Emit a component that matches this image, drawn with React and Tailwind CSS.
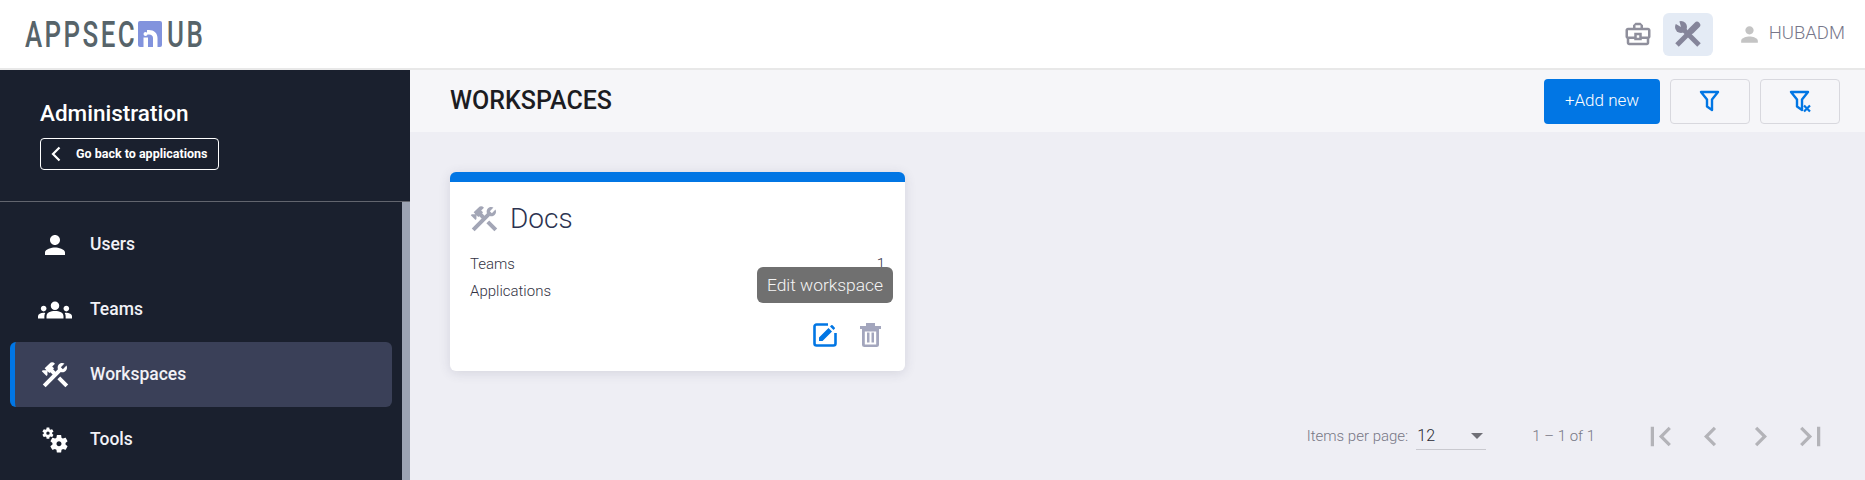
import React from "react";
import {
  MdPerson,
  MdGroups,
  MdConstruction,
  MdMiscellaneousServices,
  MdOutlineBusinessCenter,
} from "react-icons/md";

const navItems = [
  { label: "Users", icon: MdPerson, size: 30 },
  { label: "Teams", icon: MdGroups, size: 34 },
  { label: "Workspaces", icon: MdConstruction, size: 32 },
  { label: "Tools", icon: MdMiscellaneousServices, size: 30 },
];

const Logo = () => (
  <div className="flex items-center text-[#57646a] font-['Roboto',sans-serif] font-medium text-[37px] leading-none">
    <span className="w-[113px] scale-x-[0.7] origin-left tracking-[3.5px] whitespace-nowrap">APPSEC</span>
    <svg width="24" height="26" viewBox="0 0 24 26">
      <rect width="24" height="26" rx="2" fill="#8293dd" />
      <circle cx="7.500" cy="13" r="2" fill="#fff" />
      <path d="M5.500 16.500H10V26H5.500zM9 9h2c5 0 8.500 3 8.500 8v9H15v-9c0-2-1.500-3.500-4-3.500H9z" fill="#fff" />
    </svg>
    <span className="ml-[5px] w-[36px] scale-x-[0.7] origin-left tracking-[3.5px]">UB</span>
  </div>
);

const HeaderToolsIcon = () => (
  <svg width="26" height="26" viewBox="0 0 26 26" fill="none" stroke="#85859a">
    <path d="M8 8l16 16" strokeWidth="5" />
    <circle cx="6" cy="6" r="6" fill="#85859a" stroke="none" />
    <path d="M-1 2l7 4 -2-7z" fill="#e4ebf5" stroke="none" />
    <path d="M2 24l13-13" strokeWidth="5" />
    <path d="M16 10l6-6" strokeWidth="6.500" strokeLinecap="round" />
  </svg>
);

const FilterIcon = ({ clear }) => (
  <svg width="26" height="26" viewBox="0 0 26 26" fill="none" stroke="#0176e4" strokeWidth="2.400" strokeLinejoin="round">
    <path d="M4 4h17l-6 7.500V22l-5-3.500v-7z" />
    {clear && <path d="M17 17.500l6 6M23 17.500l-6 6" strokeWidth="2.200" />}
  </svg>
);

const EditIcon = () => (
  <svg width="24" height="24" viewBox="0 0 24 24" fill="none">
    <path d="M15 1.500H3.500a2 2 0 0 0-2 2v17a2 2 0 0 0 2 2h17a2 2 0 0 0 2-2V10" stroke="#0176e4" strokeWidth="2.600" />
    <path d="M6 18v-3.500L15.500 5 19 8.500 9.500 18zM17 3.500l1.200-1.200a1 1 0 0 1 1.400 0l2.100 2.100a1 1 0 0 1 0 1.400L20.500 7z" fill="#0176e4" />
  </svg>
);

const TrashIcon = () => (
  <svg width="21" height="24" viewBox="0 0 21 24" fill="#a3a6bd">
    <path d="M6 0h9v3h6v3H0V3h6z" />
    <path d="M2 6h17v15.500a2.500 2.500 0 0 1-2.500 2.500h-12A2.500 2.500 0 0 1 2 21.500zm2.800 2.500v13h11.400v-13z" clipRule="evenodd" fillRule="evenodd" />
    <path d="M7 9.500h2.500v10H7zM11.500 9.500H14v10h-2.500z" />
  </svg>
);

const PagerIcon = ({ d }) => (
  <button className="w-[50px] h-[40px] flex items-center justify-center">
    <svg width="39" height="39" viewBox="0 0 24 24" fill="#b3b3b8">
      <path d={d} />
    </svg>
  </button>
);

const App = () => {
  return (
    <div className="w-[1865px] h-[480px] overflow-hidden flex flex-col font-['Roboto',sans-serif] bg-[#eeeef4]">
      <header className="h-[70px] shrink-0 bg-white border-b-2 border-[#e8e8e8] flex items-center justify-between pl-[25px] pr-[20px]">
        <Logo />
        <div className="flex items-center">
          <MdOutlineBusinessCenter size={30} className="text-[#8f8f9c]" />
          <div className="ml-[10px] w-[50px] h-[43px] bg-[#e4ebf5] rounded-md flex items-center justify-center">
            <HeaderToolsIcon />
          </div>
          <div className="ml-[24px] flex items-center">
            <MdPerson size={25} className="text-[#c4c4c4]" />
            <span className="ml-[7px] text-[18.500px] font-light text-[#77778a]">HUBADM</span>
          </div>
        </div>
      </header>

      <div className="flex-1 flex min-h-0">
        <aside className="w-[410px] shrink-0 bg-[#1a202e] flex flex-col">
          <div className="h-[132px] shrink-0 border-b border-[#62656e] pl-[40px] pt-[30px]">
            <h1 className="text-[22.500px] leading-[26px] font-medium text-white">Administration</h1>
            <button className="mt-[12px] w-[179px] h-[32px] border border-white rounded flex items-center text-white">
              <svg width="10" height="16" viewBox="0 0 10 16" fill="none" stroke="#fff" strokeWidth="2.200" className="ml-[10px]">
                <path d="M8.500 1.500L2 8l6.500 6.500" />
              </svg>
              <span className="ml-[15px] text-[12.500px] font-bold whitespace-nowrap">Go back to applications</span>
            </button>
          </div>
          <div className="flex-1 flex min-h-0">
            <nav className="flex-1 pl-[10px] pr-[10px] pt-[10px]">
              {navItems.map((item) => {
                const Icon = item.icon;
                return (
                  <a
                    key={item.label}
                    className={
                      item.label === "Workspaces"
                        ? "h-[65px] flex items-center rounded-md bg-[#3a4058] border-l-[5px] border-[#0176e4] text-[#f1f1f6]"
                        : "h-[65px] flex items-center rounded-md border-l-[5px] border-transparent text-[#f1f1f6]"
                    }
                  >
                    <span className="w-[75px] pl-[4px] flex justify-center">
                      <Icon size={item.size} className={item.label === "Tools" ? "text-white rotate-180" : "text-white"} />
                    </span>
                    <span className="text-[17.500px] font-medium">{item.label}</span>
                  </a>
                );
              })}
            </nav>
            <div className="w-[8px] bg-[#9ca3b3]" />
          </div>
        </aside>

        <main className="flex-1 flex flex-col min-w-0">
          <div className="h-[62px] shrink-0 bg-[#f6f6f9] flex items-center justify-between pl-[40px] pr-[25px]">
            <h2 className="text-[25px] font-medium text-[#1c1c22]">WORKSPACES</h2>
            <div className="flex items-center gap-[10px]">
              <button className="w-[116px] h-[45px] bg-[#0176e4] rounded text-white text-[17px] font-light">+Add new</button>
              <button className="w-[80px] h-[45px] border border-[#d8d8de] rounded flex items-center justify-center">
                <FilterIcon />
              </button>
              <button className="w-[80px] h-[45px] border border-[#d8d8de] rounded flex items-center justify-center">
                <FilterIcon clear />
              </button>
            </div>
          </div>

          <div className="flex-1 pl-[40px] pt-[40px] flex flex-col">
            <div className="relative w-[455px] h-[199px] bg-white rounded-md shadow-[0_2px_12px_rgba(60,60,90,0.14)] overflow-hidden border-t-[10px] border-[#0176e4]">
              <div className="px-[20px] pt-[19px]">
                <div className="flex items-center text-[#2c3350]">
                  <MdConstruction size={32} className="text-[#a3a6b6] -ml-[2px]" />
                  <span className="ml-[10px] text-[28px] font-light leading-[36px]">Docs</span>
                </div>
                <div className="mt-[14px] flex justify-between text-[15px] font-light text-[#333344] leading-[27px]">
                  <span>Teams</span>
                  <span>1</span>
                </div>
                <div className="flex justify-between text-[15px] font-light text-[#333344] leading-[27px]">
                  <span>Applications</span>
                  <span>0</span>
                </div>
                <div className="mt-[18px] flex justify-end items-center gap-[23px] pr-[4px]">
                  <EditIcon />
                  <TrashIcon />
                </div>
              </div>
              <div className="absolute left-[307px] top-[85px] w-[136px] h-[36px] bg-[#707070] rounded-md text-[#f5f5f5] text-[17.400px] font-light flex items-center justify-center whitespace-nowrap">
                Edit workspace
              </div>
            </div>

            <div className="mt-[45px] flex items-center justify-end pr-[30px] text-[15px] font-light text-[#777785]">
              <span>Items per page:</span>
              <div className="ml-[8px] w-[70px] h-[28px] border-b border-[#c9c9cf] flex items-center justify-between pl-[1px] pr-[3px] text-[16px] text-[#2a2a33]">
                <span>12</span>
                <span className="w-0 h-0 border-l-[6px] border-r-[6px] border-t-[6px] border-l-transparent border-r-transparent border-t-[#6f6f76]" />
              </div>
              <span className="ml-[46px]">1 – 1 of 1</span>
              <div className="ml-[40px] flex items-center">
                <PagerIcon d="M18.41 16.59L13.82 12l4.59-4.59L17 6l-6 6 6 6zM6 6h2v12H6z" />
                <PagerIcon d="M15.41 7.41L14 6l-6 6 6 6 1.41-1.41L10.83 12z" />
                <PagerIcon d="M10 6L8.59 7.41 13.17 12l-4.58 4.59L10 18l6-6z" />
                <PagerIcon d="M5.59 7.41L10.18 12l-4.59 4.59L7 18l6-6-6-6zM16 6h2v12h-2z" />
              </div>
            </div>
          </div>
        </main>
      </div>
    </div>
  );
};

export default App;
